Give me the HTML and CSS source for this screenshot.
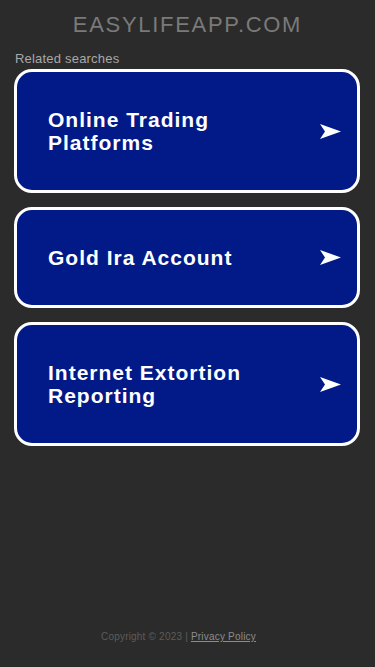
FILE: index.html
```html
<!DOCTYPE html>
<html lang="en">
<head>
    <meta charset="UTF-8">
    <meta name="viewport" content="width=device-width, initial-scale=1.0">
    <title>easylifeapp.com</title>
    <link rel="stylesheet" href="styles.css">
</head>
<body>
    <div class="page">
        <!-- Domain header -->
        <h1 class="domain">EASYLIFEAPP.COM</h1>

        <div class="related">
            <p class="related-title">Related searches</p>
            <a class="search-card" href="#">
                <span class="search-text">Online Trading Platforms</span>
                <svg class="arrow" width="21" height="15" viewBox="0 0 21 15"><path d="M0 0 L21 7.5 L0 15 L5 7.5 Z" fill="#fff"/></svg>
            </a>
            <a class="search-card" href="#">
                <span class="search-text">Gold Ira Account</span>
                <svg class="arrow" width="21" height="15" viewBox="0 0 21 15"><path d="M0 0 L21 7.5 L0 15 L5 7.5 Z" fill="#fff"/></svg>
            </a>
            <a class="search-card" href="#">
                <span class="search-text">Internet Extortion Reporting</span>
                <svg class="arrow" width="21" height="15" viewBox="0 0 21 15"><path d="M0 0 L21 7.5 L0 15 L5 7.5 Z" fill="#fff"/></svg>
            </a>
        </div>

        <div class="footer">
            Copyright &copy; 2023 | <a href="#">Privacy Policy</a>
        </div>
    </div>
</body>
</html>
```

FILE: styles.css
```css
body {
    font-family: "Liberation Sans", Arial, sans-serif;
    margin: 0;
    padding: 0;
    background-color: #2b2b2b;
}
.page {
    display: flex;
    flex-direction: column;
    min-height: 667px;
}
.domain {
    margin: 12px 0 0 0;
    text-align: center;
    font-size: 22px;
    font-weight: normal;
    color: #7a7a7a;
    line-height: 26px;
    letter-spacing: 1.7px;
}
.related {
    padding: 0 15px 0 14px;
}
.related-title {
    margin: 13px 0 3px 1px;
    font-size: 13px;
    line-height: 15px;
    color: #a8a8a8;
    letter-spacing: 0.2px;
}
.search-card {
    display: flex;
    align-items: center;
    justify-content: space-between;
    background-color: #011a88;
    border: 3px solid #fff;
    border-radius: 18px;
    padding: 36px 16px 36px 31px;
    margin-bottom: 14px;
    text-decoration: none;
    color: #fff;
}
.search-text {
    font-size: 21px;
    font-weight: bold;
    line-height: 23px;
    max-width: 240px;
    letter-spacing: 1px;
}
.arrow {
    flex-shrink: 0;
}
.footer {
    margin-top: auto;
    padding: 0 18px 25px 0;
    text-align: center;
    font-size: 10px;
    color: #5c5c5c;
    letter-spacing: 0.2px;
}
.footer a {
    color: #8c8c8c;
}
```
